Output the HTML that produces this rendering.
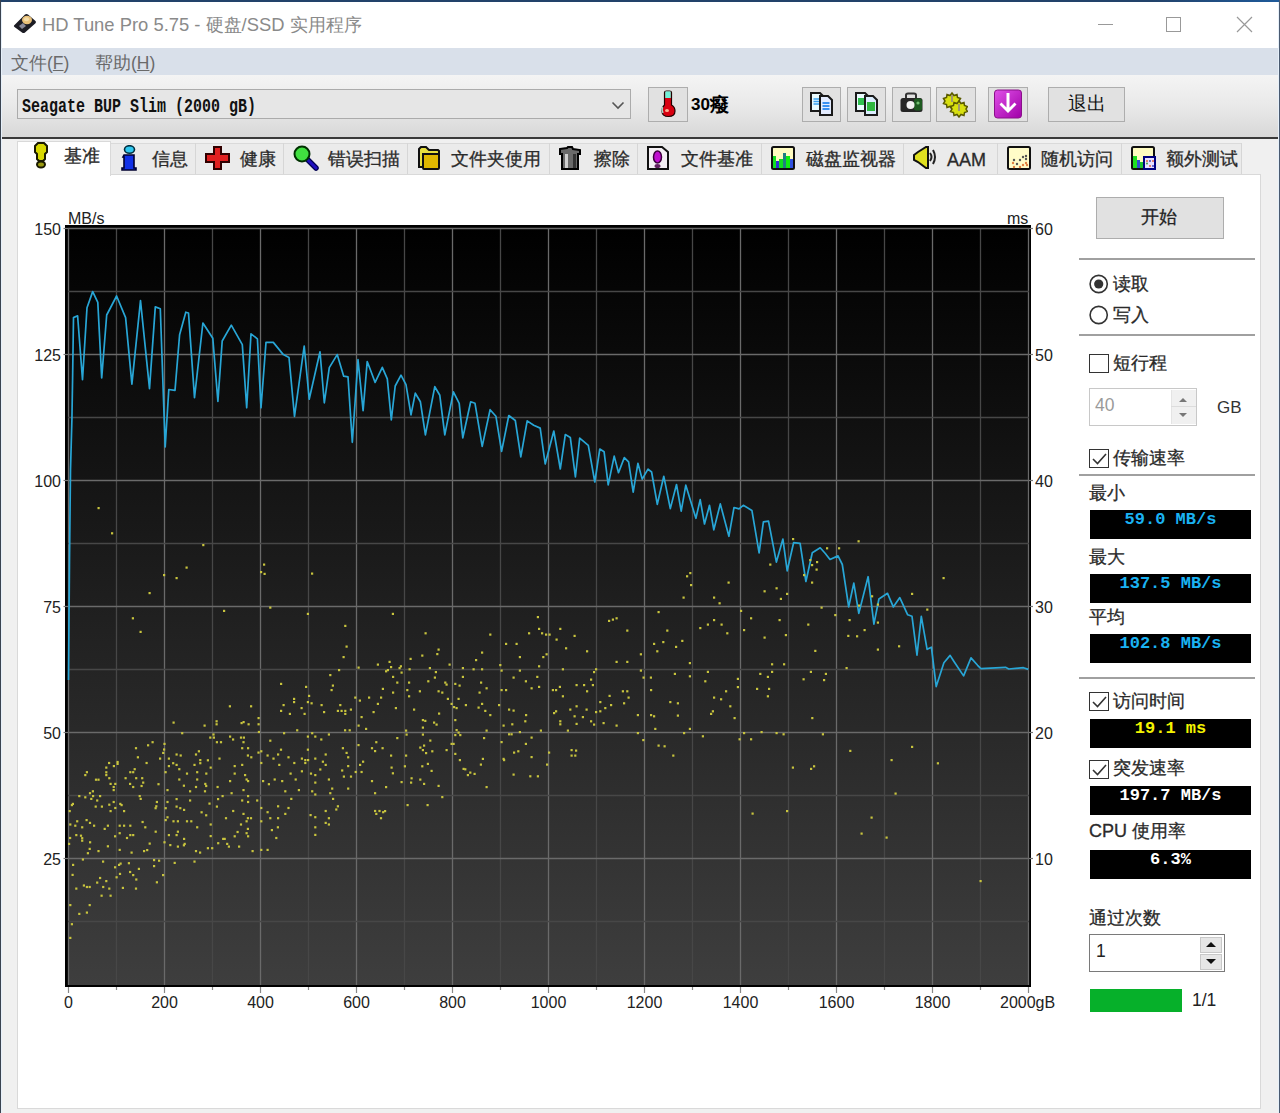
<!DOCTYPE html>
<html><head><meta charset="utf-8">
<style>
*{box-sizing:border-box}
html,body{margin:0;padding:0}
body{width:1280px;height:1113px;overflow:hidden;position:relative;background:#f0f0f0;font-family:"Liberation Sans",sans-serif;color:#000}
.a{position:absolute}
.btn{position:absolute;background:#e1e1e1;border:1px solid #adadad}
.tab{position:absolute;top:143px;height:32px;background:#f0f0f0;border:1px solid #d9d9d9;border-bottom:none;font-size:18px;color:#303030;white-space:nowrap}
.tab .ic{position:absolute;top:3px}
.tab .tx{position:absolute;top:4px}
.tt{font-size:18px;font-weight:500;color:#2a2a2a;-webkit-text-stroke:0.3px #2a2a2a;line-height:20px;white-space:nowrap}
.cl{margin-top:1px;font-size:16px;color:#222;line-height:18px;white-space:nowrap}
.lbl{position:absolute;font-size:18px;font-weight:500;color:#2a2a2a;-webkit-text-stroke:0.3px #2a2a2a;white-space:nowrap;line-height:20px}
.box{position:absolute;background:#000;left:1090px;width:161px;height:29px;font-family:"Liberation Mono",monospace;font-weight:bold;font-size:17px;line-height:20px;text-align:center;white-space:pre}
.chk{position:absolute;left:1089px;width:20px;height:19px;border:1.5px solid #333;background:#fff}
.sep{position:absolute;left:1079px;width:176px;height:2px;background:#a0a0a0}
</style></head><body>
<!-- window frame -->
<div class="a" style="left:0;top:0;width:1280px;height:2px;background:linear-gradient(90deg,#22426a 0,#22426a 90%,#1e5a9a 100%)"></div>
<div class="a" style="left:0;top:0;width:1px;height:1113px;background:#3a4350"></div>
<div class="a" style="left:1279px;top:0;width:1px;height:1113px;background:#4a5a70"></div>
<div class="a" style="left:1px;top:2px;width:1px;height:1111px;background:#e6f0fa"></div>
<div class="a" style="left:1278px;top:2px;width:1px;height:1111px;background:#e6f0fa"></div>
<!-- title bar -->
<div class="a" style="left:2px;top:2px;width:1276px;height:46px;background:#fff"></div>
<div class="a" id="title" style="left:42px;top:14px;font-size:18.4px;color:#8a8a8a;white-space:nowrap;line-height:22px">HD Tune Pro 5.75 - 硬盘/SSD 实用程序</div>
<!-- menu -->
<div class="a" style="left:2px;top:48px;width:1276px;height:27px;background:#d9e0ea"></div>
<div class="a" style="left:11px;top:52px;font-size:17.5px;color:#6a6a6a;line-height:22px;white-space:nowrap">文件(<u>F</u>)</div>
<div class="a" style="left:95px;top:52px;font-size:17.5px;color:#6a6a6a;line-height:22px;white-space:nowrap">帮助(<u>H</u>)</div>
<!-- toolbar -->
<div class="a" style="left:2px;top:75px;width:1276px;height:62px;background:linear-gradient(#f4f4f4,#e9e9e9 50%,#d8d8d8)"></div>
<div class="a" style="left:2px;top:137px;width:1276px;height:2px;background:#3a3a3a"></div>
<!-- combo -->
<div class="a" style="left:17px;top:89px;width:614px;height:30px;background:#e6e6e6;border:1px solid #ababab"></div>
<div class="a" id="combo" style="left:22px;top:95px;font-family:'Liberation Mono',monospace;font-size:15px;font-weight:bold;line-height:20px;color:#111;white-space:pre;transform:scaleY(1.3);transform-origin:0 0">Seagate BUP Slim (2000 gB)</div>
<!-- temp button -->
<div class="btn" style="left:648px;top:87px;width:40px;height:35px;"></div>
<div class="a" style="left:691px;top:95px;font-size:17px;font-weight:bold;line-height:20px;white-space:nowrap">30<span style="font-size:19px;vertical-align:-1px">癈</span></div>
<!-- icon buttons -->
<div class="btn" style="left:802px;top:87px;width:39px;height:35px"></div>
<div class="btn" style="left:847px;top:87px;width:39px;height:35px"></div>
<div class="btn" style="left:892px;top:87px;width:39px;height:35px"></div>
<div class="btn" style="left:936px;top:87px;width:40px;height:35px"></div>
<div class="btn" style="left:988px;top:87px;width:40px;height:35px"></div>
<div class="btn" style="left:1048px;top:87px;width:77px;height:35px"></div>
<div class="a" style="left:1068px;top:93px;font-size:19px;line-height:22px;color:#111">退出</div>

<!-- toolbar icons -->
<svg class="a" style="left:659px;top:90px" width="18" height="28" viewBox="0 0 18 28"><path d="M5.5 2.5q0-1.5 2-1.5h3q2 0 2 1.5V15q3.5 2 3.5 6 0 5.5-6.5 5.5T3 21q0-4 2.5-6z" fill="#d80010" stroke="#200000" stroke-width="1.2"/><path d="M6.2 2q0-.7 1-.7h3.6q1 0 1 .7v6H6.2z" fill="#70f0d8"/><ellipse cx="8" cy="20.5" rx="2" ry="1.6" fill="#ffb090"/><path d="M3.5 17q-1 3 .5 6" stroke="#a8d8c8" stroke-width="1.5" fill="none"/></svg>
<svg class="a" style="left:809px;top:91px" width="27" height="26" viewBox="0 0 27 26"><path d="M2 2h9l3 3v15H2z" fill="#eafcff" stroke="#1a1a1a" stroke-width="2"/><path d="M4.5 8h6M4.5 10.5h6M4.5 13h6" stroke="#3aa0f0" stroke-width="1.6"/><path d="M11 5h8l4 4v15H11z" fill="#e4ecff" stroke="#1a1a1a" stroke-width="2"/><path d="M13.5 12h7M13.5 15h7M13.5 18h7" stroke="#3a90f0" stroke-width="1.8"/></svg>
<svg class="a" style="left:854px;top:91px" width="27" height="26" viewBox="0 0 27 26"><path d="M2 2h9l3 3v15H2z" fill="#eafcff" stroke="#1a1a1a" stroke-width="2"/><rect x="4" y="7" width="6" height="7" fill="#30c050"/><path d="M11 5h8l4 4v15H11z" fill="#dceeff" stroke="#1a1a1a" stroke-width="2"/><rect x="13" y="11" width="8" height="9" fill="#30b840"/></svg>
<svg class="a" style="left:899px;top:92px" width="25" height="22" viewBox="0 0 25 22"><path d="M7 6V3q0-1.5 2-1.5h6q2 0 2 1.5v3" fill="none" stroke="#333" stroke-width="2"/><rect x="1.5" y="6" width="22" height="14" rx="2.5" fill="#262626"/><rect x="15" y="6.5" width="8" height="12" rx="2" fill="#1d5a20"/><circle cx="11.5" cy="13" r="4" fill="#f2f2f2"/><circle cx="19" cy="11" r="1.6" fill="#70c070"/></svg>
<svg class="a" style="left:942px;top:91px" width="26" height="27" viewBox="0 0 26 27"><g stroke="#5a5a00" stroke-width="1.5" fill="#d8e010"><path d="M9 2l2 2.5 3-1 .5 3 3 1-1.5 2.5 1.5 2.5-3 1-.5 3-3-1L9 18l-2-2.5-3 1-.5-3-3-1 1.5-2.5L.5 7.5l3-1 .5-3 3 1z" transform="translate(1,0)"/><path d="M9 2l2 2.5 3-1 .5 3 3 1-1.5 2.5 1.5 2.5-3 1-.5 3-3-1L9 18l-2-2.5-3 1-.5-3-3-1 1.5-2.5L.5 7.5l3-1 .5-3 3 1z" transform="translate(8,8)"/></g><rect x="9" y="4" width="2" height="7" fill="#a09870"/><rect x="16" y="13" width="2" height="7" fill="#a09870"/></svg>
<svg class="a" style="left:993px;top:89px" width="30" height="30" viewBox="0 0 30 30"><defs><linearGradient id="pg" x1="0" y1="0" x2="1" y2="1"><stop offset="0" stop-color="#e050e8"/><stop offset="1" stop-color="#a000a8"/></linearGradient></defs><rect x="1.5" y="1" width="27" height="28" rx="3" fill="url(#pg)" stroke="#8a108a" stroke-width="1"/><path d="M13.5 4h3v14.5l5-5 2 2L15 24l-8.5-8.5 2-2 5 5z" fill="#fff"/></svg>
<svg class="a" style="left:611px;top:101px" width="14" height="9" viewBox="0 0 14 9"><path d="M1.5 1.5l5.5 5.5 5.5-5.5" fill="none" stroke="#555" stroke-width="1.6"/></svg>
<!-- title icon -->
<svg class="a" style="left:13px;top:12px" width="24" height="22" viewBox="0 0 24 22"><path d="M1 13.5L12 2.5q1.5-1.2 3 0l7.5 6.5q1 1 0 2.2L12 20.5q-1.5 1.2-3 0L1.5 15q-1-.8-.5-1.5z" fill="#1c1c24"/><ellipse cx="14" cy="8" rx="5" ry="4.2" fill="#e8c078"/><ellipse cx="13.5" cy="7.2" rx="2.6" ry="2" fill="#f4dca8"/><path d="M6 14l4-3 3 3-4 3z" fill="#8a8a9a"/></svg>
<!-- window controls -->
<div class="a" style="left:1098px;top:24px;width:15px;height:1px;background:#999"></div>
<div class="a" style="left:1166px;top:17px;width:15px;height:15px;border:1px solid #999"></div>
<svg class="a" style="left:1236px;top:16px" width="17" height="17" viewBox="0 0 17 17"><path d="M1 1l15 15M16 1L1 16" stroke="#999" stroke-width="1.2"/></svg>
<!-- tabs area -->
<div class="a" style="left:17px;top:174px;width:1244px;height:935px;background:#fff;border:1px solid #d9d9d9"></div>

<div class="a" style="left:17px;top:143px;width:1225px;height:32px;background:#ebebeb;border-top:1px solid #dadada;border-bottom:1px solid #d9d9d9"></div>
<div class="a" style="left:195px;top:143px;width:1px;height:31px;background:#d6d6d6"></div>
<div class="a" style="left:283px;top:143px;width:1px;height:31px;background:#d6d6d6"></div>
<div class="a" style="left:407px;top:143px;width:1px;height:31px;background:#d6d6d6"></div>
<div class="a" style="left:549px;top:143px;width:1px;height:31px;background:#d6d6d6"></div>
<div class="a" style="left:637px;top:143px;width:1px;height:31px;background:#d6d6d6"></div>
<div class="a" style="left:761px;top:143px;width:1px;height:31px;background:#d6d6d6"></div>
<div class="a" style="left:903px;top:143px;width:1px;height:31px;background:#d6d6d6"></div>
<div class="a" style="left:997px;top:143px;width:1px;height:31px;background:#d6d6d6"></div>
<div class="a" style="left:1121px;top:143px;width:1px;height:31px;background:#d6d6d6"></div>
<div class="a" style="left:1241px;top:143px;width:1px;height:31px;background:#d6d6d6"></div>
<!-- selected tab -->
<div class="a" style="left:17px;top:141px;width:94px;height:35px;background:#fff;border:1px solid #d9d9d9;border-bottom:none"></div>
<div class="a tt" style="left:64px;top:146px">基准</div>
<div class="a tt" style="left:152px;top:149px">信息</div>
<div class="a tt" style="left:240px;top:149px">健康</div>
<div class="a tt" style="left:328px;top:149px">错误扫描</div>
<div class="a tt" style="left:451px;top:149px">文件夹使用</div>
<div class="a tt" style="left:594px;top:149px">擦除</div>
<div class="a tt" style="left:681px;top:149px">文件基准</div>
<div class="a tt" style="left:806px;top:149px">磁盘监视器</div>
<div class="a tt" style="left:947px;top:150px">AAM</div>
<div class="a tt" style="left:1041px;top:149px">随机访问</div>
<div class="a tt" style="left:1166px;top:149px">额外测试</div>
<!-- tab icons -->
<svg class="a" style="left:34px;top:142px" width="14" height="27" viewBox="0 0 14 27"><path d="M4 1h6l3 3v6l-2 2v5l-2 2H5l-2-2v-5L1 10V4z" fill="#d8d800" stroke="#1a1a00" stroke-width="2"/><ellipse cx="7" cy="22.5" rx="4" ry="3" fill="#9a9a10" stroke="#1a1a00" stroke-width="2"/></svg>
<svg class="a" style="left:121px;top:145px" width="16" height="26" viewBox="0 0 16 26"><ellipse cx="8.5" cy="4.5" rx="5" ry="3.8" fill="#30c8f0" stroke="#003040" stroke-width="1.6"/><path d="M3 10h10v13h2v2H1v-2h2V12H2z" fill="#1030e8" stroke="#000030" stroke-width="1.6"/></svg>
<svg class="a" style="left:205px;top:146px" width="25" height="24" viewBox="0 0 25 24"><path d="M9 1h7v7h8v8h-8v7H9v-7H1V8h8z" fill="#e02020" stroke="#300000" stroke-width="2"/></svg>
<svg class="a" style="left:292px;top:145px" width="27" height="26" viewBox="0 0 27 26"><line x1="15" y1="14" x2="24" y2="23" stroke="#000050" stroke-width="5.5" stroke-linecap="round"/><line x1="15" y1="14" x2="24" y2="23" stroke="#2010c0" stroke-width="3" stroke-linecap="round"/><circle cx="10" cy="9" r="7.5" fill="#40e040" stroke="#003000" stroke-width="2"/></svg>
<svg class="a" style="left:416px;top:145px" width="26" height="26" viewBox="0 0 26 26"><path d="M3 4l2-2h5l3 3h9l1 1v3H7v13H3z" fill="#e8e040" stroke="#111" stroke-width="2"/><rect x="7" y="9" width="16" height="15" rx="1" fill="#e0b800" stroke="#111" stroke-width="2"/></svg>
<svg class="a" style="left:558px;top:145px" width="24" height="26" viewBox="0 0 24 26"><path d="M2 4l7-1 1-1h4l1 2 7 1v4h-2v15H4V9H2z" fill="#6a6a6a" stroke="#000" stroke-width="2"/><rect x="7" y="9" width="3" height="14" fill="#d0d0d0"/><rect x="15" y="9" width="3" height="14" fill="#333"/></svg>
<svg class="a" style="left:646px;top:145px" width="24" height="26" viewBox="0 0 24 26"><path d="M2 2h14l6 5v17H2z" fill="#f4f0f4" stroke="#111" stroke-width="2"/><ellipse cx="11.5" cy="12" rx="4" ry="6" fill="#c010d0" stroke="#400040" stroke-width="1.5"/><ellipse cx="11.5" cy="21" rx="3" ry="2" fill="#602060"/></svg>
<svg class="a" style="left:770px;top:145px" width="26" height="26" viewBox="0 0 26 26"><rect x="2" y="2" width="22" height="22" rx="1.5" fill="#fffcc0" stroke="#101010" stroke-width="2"/><path d="M3 11h3v12H3z" fill="#10e020"/><path d="M6 16h3v7H6z" fill="#3030d0"/><path d="M9 14h4v9H9z" fill="#10e020"/><path d="M13 8h3v15h-3z" fill="#208080"/><path d="M16 11h4v12h-4z" fill="#10ee10"/><path d="M20 14h3v9h-3z" fill="#3050e0"/></svg>
<svg class="a" style="left:912px;top:145px" width="27" height="25" viewBox="0 0 27 25"><path d="M2 10l4-3 8-5h2v21h-2l-8-6-4-2z" fill="#e0e020" stroke="#111" stroke-width="2"/><path d="M18 8q3 4 0 8M21 5q4 7 0 14" fill="none" stroke="#222" stroke-width="2"/></svg>
<svg class="a" style="left:1006px;top:145px" width="26" height="26" viewBox="0 0 26 26"><rect x="2" y="2" width="22" height="22" rx="1.5" fill="#fffcc8" stroke="#101010" stroke-width="2"/><g fill="#555"><circle cx="8" cy="15" r="1.2"/><circle cx="14" cy="15" r="1.2"/><circle cx="17" cy="12" r="1.2"/><circle cx="20" cy="11" r="1.2"/><circle cx="20" cy="14" r="1.2"/><circle cx="11" cy="19" r="1.2"/></g><g fill="#e08040"><circle cx="7" cy="18" r="1.2"/><circle cx="8" cy="22" r="1.2"/><circle cx="14" cy="22" r="1.2"/><circle cx="17" cy="20" r="1.2"/><circle cx="21" cy="20" r="1.2"/><circle cx="20" cy="18" r="1.2"/></g></svg>
<svg class="a" style="left:1130px;top:145px" width="27" height="26" viewBox="0 0 27 26"><rect x="2" y="2" width="22" height="22" rx="1.5" fill="#fffcc0" stroke="#101010" stroke-width="2"/><path d="M3 11h4v12H3z" fill="#20e020"/><path d="M7 15h3v8H7z" fill="#3050d0"/><path d="M10 17h3v6h-3z" fill="#20c030"/><rect x="14" y="12" width="11" height="12" fill="#e8e0ff" stroke="#000080" stroke-width="2"/><g fill="#e06040"><circle cx="17" cy="16" r="1"/><circle cx="23" cy="16" r="1"/><circle cx="20" cy="21" r="1"/></g><g fill="#40a040"><circle cx="17" cy="18.5" r="1"/></g><g fill="#4040c0"><circle cx="20" cy="16" r="1"/><circle cx="23" cy="21" r="1"/></g></svg>

<!-- CHART -->
<svg class="a" style="left:0;top:0" width="1280" height="1113" viewBox="0 0 1280 1113">
<defs><linearGradient id="bg" x1="0" y1="0" x2="0" y2="1"><stop offset="0" stop-color="#000"/><stop offset="1" stop-color="#3e3e3e"/></linearGradient></defs>
<rect x="65" y="225" width="966" height="762" fill="#000"/>
<rect x="68" y="228" width="961" height="757" fill="url(#bg)"/>
<line x1="68.5" y1="228" x2="68.5" y2="985" stroke="#6a6a6a" stroke-width="1.3"/>
<line x1="68.5" y1="987" x2="68.5" y2="993" stroke="#888" stroke-width="1.2"/>
<line x1="116.5" y1="228" x2="116.5" y2="985" stroke="#474747" stroke-width="1.3"/>
<line x1="116.5" y1="987" x2="116.5" y2="990" stroke="#888" stroke-width="1.2"/>
<line x1="164.5" y1="228" x2="164.5" y2="985" stroke="#6a6a6a" stroke-width="1.3"/>
<line x1="164.5" y1="987" x2="164.5" y2="993" stroke="#888" stroke-width="1.2"/>
<line x1="212.5" y1="228" x2="212.5" y2="985" stroke="#474747" stroke-width="1.3"/>
<line x1="212.5" y1="987" x2="212.5" y2="990" stroke="#888" stroke-width="1.2"/>
<line x1="260.5" y1="228" x2="260.5" y2="985" stroke="#6a6a6a" stroke-width="1.3"/>
<line x1="260.5" y1="987" x2="260.5" y2="993" stroke="#888" stroke-width="1.2"/>
<line x1="308.5" y1="228" x2="308.5" y2="985" stroke="#474747" stroke-width="1.3"/>
<line x1="308.5" y1="987" x2="308.5" y2="990" stroke="#888" stroke-width="1.2"/>
<line x1="356.5" y1="228" x2="356.5" y2="985" stroke="#6a6a6a" stroke-width="1.3"/>
<line x1="356.5" y1="987" x2="356.5" y2="993" stroke="#888" stroke-width="1.2"/>
<line x1="404.5" y1="228" x2="404.5" y2="985" stroke="#474747" stroke-width="1.3"/>
<line x1="404.5" y1="987" x2="404.5" y2="990" stroke="#888" stroke-width="1.2"/>
<line x1="452.5" y1="228" x2="452.5" y2="985" stroke="#6a6a6a" stroke-width="1.3"/>
<line x1="452.5" y1="987" x2="452.5" y2="993" stroke="#888" stroke-width="1.2"/>
<line x1="500.5" y1="228" x2="500.5" y2="985" stroke="#474747" stroke-width="1.3"/>
<line x1="500.5" y1="987" x2="500.5" y2="990" stroke="#888" stroke-width="1.2"/>
<line x1="548.5" y1="228" x2="548.5" y2="985" stroke="#6a6a6a" stroke-width="1.3"/>
<line x1="548.5" y1="987" x2="548.5" y2="993" stroke="#888" stroke-width="1.2"/>
<line x1="596.5" y1="228" x2="596.5" y2="985" stroke="#474747" stroke-width="1.3"/>
<line x1="596.5" y1="987" x2="596.5" y2="990" stroke="#888" stroke-width="1.2"/>
<line x1="644.5" y1="228" x2="644.5" y2="985" stroke="#6a6a6a" stroke-width="1.3"/>
<line x1="644.5" y1="987" x2="644.5" y2="993" stroke="#888" stroke-width="1.2"/>
<line x1="692.5" y1="228" x2="692.5" y2="985" stroke="#474747" stroke-width="1.3"/>
<line x1="692.5" y1="987" x2="692.5" y2="990" stroke="#888" stroke-width="1.2"/>
<line x1="740.5" y1="228" x2="740.5" y2="985" stroke="#6a6a6a" stroke-width="1.3"/>
<line x1="740.5" y1="987" x2="740.5" y2="993" stroke="#888" stroke-width="1.2"/>
<line x1="788.5" y1="228" x2="788.5" y2="985" stroke="#474747" stroke-width="1.3"/>
<line x1="788.5" y1="987" x2="788.5" y2="990" stroke="#888" stroke-width="1.2"/>
<line x1="836.5" y1="228" x2="836.5" y2="985" stroke="#6a6a6a" stroke-width="1.3"/>
<line x1="836.5" y1="987" x2="836.5" y2="993" stroke="#888" stroke-width="1.2"/>
<line x1="884.5" y1="228" x2="884.5" y2="985" stroke="#474747" stroke-width="1.3"/>
<line x1="884.5" y1="987" x2="884.5" y2="990" stroke="#888" stroke-width="1.2"/>
<line x1="932.5" y1="228" x2="932.5" y2="985" stroke="#6a6a6a" stroke-width="1.3"/>
<line x1="932.5" y1="987" x2="932.5" y2="993" stroke="#888" stroke-width="1.2"/>
<line x1="980.5" y1="228" x2="980.5" y2="985" stroke="#474747" stroke-width="1.3"/>
<line x1="980.5" y1="987" x2="980.5" y2="990" stroke="#888" stroke-width="1.2"/>
<line x1="1028.5" y1="228" x2="1028.5" y2="985" stroke="#6a6a6a" stroke-width="1.3"/>
<line x1="1028.5" y1="987" x2="1028.5" y2="993" stroke="#888" stroke-width="1.2"/>
<line x1="68" y1="228.5" x2="1029" y2="228.5" stroke="#6a6a6a" stroke-width="1.3"/>
<line x1="68" y1="291.5" x2="1029" y2="291.5" stroke="#474747" stroke-width="1.3"/>
<line x1="68" y1="354.5" x2="1029" y2="354.5" stroke="#6a6a6a" stroke-width="1.3"/>
<line x1="68" y1="417.5" x2="1029" y2="417.5" stroke="#474747" stroke-width="1.3"/>
<line x1="68" y1="480.5" x2="1029" y2="480.5" stroke="#6a6a6a" stroke-width="1.3"/>
<line x1="68" y1="543.5" x2="1029" y2="543.5" stroke="#474747" stroke-width="1.3"/>
<line x1="68" y1="606.5" x2="1029" y2="606.5" stroke="#6a6a6a" stroke-width="1.3"/>
<line x1="68" y1="669.5" x2="1029" y2="669.5" stroke="#474747" stroke-width="1.3"/>
<line x1="68" y1="732.5" x2="1029" y2="732.5" stroke="#6a6a6a" stroke-width="1.3"/>
<line x1="68" y1="795.5" x2="1029" y2="795.5" stroke="#474747" stroke-width="1.3"/>
<line x1="68" y1="858.5" x2="1029" y2="858.5" stroke="#6a6a6a" stroke-width="1.3"/>
<line x1="68" y1="921.5" x2="1029" y2="921.5" stroke="#474747" stroke-width="1.3"/>
<polyline fill="none" stroke="#28a6d6" stroke-width="1.7" stroke-linejoin="round" points="68.5,680 69.5,560 70.5,470 71.9,420 72.6,377.9 73.5,317.6 77.6,315.8 82.5,379.7 87,307.8 92.7,291.6 97.8,302.4 101.7,377.9 106.7,315 116.6,296 125.6,317.6 131.9,384.2 140.5,300.6 149.5,388.6 155.3,306.9 160.3,308.7 165.2,447 168.8,389.5 175,390.4 179.6,334.7 185.8,312.2 188.5,313 194.5,397.6 202.9,323 212.8,338.3 217.9,401.4 222.2,341 231.3,325.2 242.3,344.6 246.7,407.8 251,333.8 257.4,338.8 261,407.8 266,342.4 273.3,342.4 283.3,354.6 289,357.5 294.5,416.4 304.2,346 309.2,399.2 320,351.8 324.3,402.8 329.3,367.6 337.2,354.6 343.7,376.2 348,376.9 352.3,442.3 358,359.7 363.1,410.7 367.2,361.6 370,368.8 375.1,382.4 382.3,367.3 387.3,378.8 391.3,419.8 395.2,386 401,375.2 406,384.6 411,414.8 415.3,393.2 420.4,401.8 425.4,434.9 434.8,386.7 439.8,395.3 444.8,434.9 453.4,391.8 459.2,403.3 462.8,437.8 470.7,401.8 475,403.3 482.2,446.4 490.1,409.7 495.9,416.2 501.6,451.4 508.8,415.5 515.3,420.5 520.8,456.8 527.2,420.9 533.7,425.2 540.2,428.1 545.2,464 553.8,431 560.3,469 565.3,434.6 570.3,437.4 575.4,477 579.7,438.2 588.3,445.3 594.8,482 599.8,449 604.1,451.8 608.2,484.9 614.2,456.1 618.5,472.7 624.3,457.6 628.6,461.9 633.2,492.1 637.9,463.3 642.2,479.1 648,469.1 651.6,472 657.3,504.3 663.8,476.3 670.3,508.6 676.5,484.5 681.2,511.1 685.8,485.2 695.9,518.3 700.2,499.6 704.5,524 709.5,505.3 713.8,529.8 720.3,503.9 728.9,536.3 734,507.5 739,508.9 743.3,505.3 751.9,510.4 759.1,552.8 763.4,521.9 768.5,521.2 776.4,562.1 782.9,539.1 787.2,570.8 793.6,542.7 800.1,543.4 805.9,581.5 812.3,552.8 820.2,547.8 825.3,553.5 830,559.5 838,555.9 842.3,564.5 848.7,606.9 853.8,583.2 858.8,613.4 868.1,576.7 873.9,624.2 878.9,599 887.5,593.3 893.3,606.9 899.8,597.6 907.7,614.8 912,616.3 917,655.1 921.3,616.3 927.1,649.3 931.4,647.2 936.2,686.6 943.9,662.8 950.1,655.4 953.8,661.2 963.6,675.9 971,657.9 977.6,665.3 980.9,668.6 1005.5,667.3 1008.8,669 1023.5,667.7 1028.4,669.4"/>
<line x1="63.5" y1="228.5" x2="68" y2="228.5" stroke="#777" stroke-width="1.2"/><line x1="1029" y1="228.5" x2="1033" y2="228.5" stroke="#777" stroke-width="1.2"/><line x1="63.5" y1="354.5" x2="68" y2="354.5" stroke="#777" stroke-width="1.2"/><line x1="1029" y1="354.5" x2="1033" y2="354.5" stroke="#777" stroke-width="1.2"/><line x1="63.5" y1="480.5" x2="68" y2="480.5" stroke="#777" stroke-width="1.2"/><line x1="1029" y1="480.5" x2="1033" y2="480.5" stroke="#777" stroke-width="1.2"/><line x1="63.5" y1="606.5" x2="68" y2="606.5" stroke="#777" stroke-width="1.2"/><line x1="1029" y1="606.5" x2="1033" y2="606.5" stroke="#777" stroke-width="1.2"/><line x1="63.5" y1="732.5" x2="68" y2="732.5" stroke="#777" stroke-width="1.2"/><line x1="1029" y1="732.5" x2="1033" y2="732.5" stroke="#777" stroke-width="1.2"/><line x1="63.5" y1="858.5" x2="68" y2="858.5" stroke="#777" stroke-width="1.2"/><line x1="1029" y1="858.5" x2="1033" y2="858.5" stroke="#777" stroke-width="1.2"/><!--DOTS--><g fill="#c8c43e"><rect x="97.5" y="507.0" width="2.2" height="2.2"/><rect x="111.0" y="532.2" width="2.2" height="2.2"/><rect x="202.2" y="544.0" width="2.2" height="2.2"/><rect x="185.5" y="566.5" width="2.2" height="2.2"/><rect x="163.0" y="574.0" width="2.2" height="2.2"/><rect x="175.5" y="577.0" width="2.2" height="2.2"/><rect x="148.5" y="592.0" width="2.2" height="2.2"/><rect x="131.8" y="617.2" width="2.2" height="2.2"/><rect x="139.5" y="630.8" width="2.2" height="2.2"/><rect x="263.0" y="563.5" width="2.2" height="2.2"/><rect x="260.0" y="571.0" width="2.2" height="2.2"/><rect x="263.5" y="572.8" width="2.2" height="2.2"/><rect x="311.0" y="572.5" width="2.2" height="2.2"/><rect x="223.0" y="609.8" width="2.2" height="2.2"/><rect x="269.2" y="606.5" width="2.2" height="2.2"/><rect x="306.8" y="612.8" width="2.2" height="2.2"/><rect x="344.2" y="624.8" width="2.2" height="2.2"/><rect x="345.5" y="645.5" width="2.2" height="2.2"/><rect x="342.5" y="656.0" width="2.2" height="2.2"/><rect x="338.0" y="669.0" width="2.2" height="2.2"/><rect x="357.5" y="666.5" width="2.2" height="2.2"/><rect x="376.8" y="663.5" width="2.2" height="2.2"/><rect x="329.2" y="674.0" width="2.2" height="2.2"/><rect x="331.8" y="684.5" width="2.2" height="2.2"/><rect x="330.5" y="689.0" width="2.2" height="2.2"/><rect x="280.0" y="682.8" width="2.2" height="2.2"/><rect x="305.0" y="685.8" width="2.2" height="2.2"/><rect x="308.0" y="694.8" width="2.2" height="2.2"/><rect x="293.0" y="697.8" width="2.2" height="2.2"/><rect x="293.0" y="701.0" width="2.2" height="2.2"/><rect x="306.8" y="701.0" width="2.2" height="2.2"/><rect x="310.5" y="702.2" width="2.2" height="2.2"/><rect x="282.5" y="704.0" width="2.2" height="2.2"/><rect x="280.0" y="709.8" width="2.2" height="2.2"/><rect x="288.8" y="712.8" width="2.2" height="2.2"/><rect x="300.5" y="707.0" width="2.2" height="2.2"/><rect x="303.5" y="712.8" width="2.2" height="2.2"/><rect x="320.5" y="704.0" width="2.2" height="2.2"/><rect x="323.0" y="711.0" width="2.2" height="2.2"/><rect x="339.2" y="704.0" width="2.2" height="2.2"/><rect x="336.8" y="709.8" width="2.2" height="2.2"/><rect x="340.5" y="709.8" width="2.2" height="2.2"/><rect x="344.2" y="709.8" width="2.2" height="2.2"/><rect x="344.2" y="712.8" width="2.2" height="2.2"/><rect x="349.8" y="708.5" width="2.2" height="2.2"/><rect x="354.2" y="696.5" width="2.2" height="2.2"/><rect x="358.8" y="699.5" width="2.2" height="2.2"/><rect x="368.0" y="696.5" width="2.2" height="2.2"/><rect x="380.0" y="696.5" width="2.2" height="2.2"/><rect x="376.8" y="702.8" width="2.2" height="2.2"/><rect x="381.8" y="687.8" width="2.2" height="2.2"/><rect x="372.5" y="711.0" width="2.2" height="2.2"/><rect x="360.5" y="716.0" width="2.2" height="2.2"/><rect x="357.5" y="724.5" width="2.2" height="2.2"/><rect x="365.0" y="727.8" width="2.2" height="2.2"/><rect x="228.8" y="705.2" width="2.2" height="2.2"/><rect x="250.0" y="705.2" width="2.2" height="2.2"/><rect x="172.5" y="721.5" width="2.2" height="2.2"/><rect x="203.5" y="724.5" width="2.2" height="2.2"/><rect x="215.5" y="720.2" width="2.2" height="2.2"/><rect x="215.5" y="723.2" width="2.2" height="2.2"/><rect x="242.5" y="721.0" width="2.2" height="2.2"/><rect x="240.5" y="722.0" width="2.2" height="2.2"/><rect x="247.5" y="723.2" width="2.2" height="2.2"/><rect x="257.5" y="717.0" width="2.2" height="2.2"/><rect x="257.5" y="723.2" width="2.2" height="2.2"/><rect x="181.1" y="732.1" width="2.2" height="2.2"/><rect x="212.4" y="733.4" width="2.2" height="2.2"/><rect x="209.2" y="736.5" width="2.2" height="2.2"/><rect x="212.8" y="736.5" width="2.2" height="2.2"/><rect x="215.8" y="741.1" width="2.2" height="2.2"/><rect x="219.9" y="741.1" width="2.2" height="2.2"/><rect x="151.5" y="741.1" width="2.2" height="2.2"/><rect x="147.0" y="744.2" width="2.2" height="2.2"/><rect x="163.4" y="742.8" width="2.2" height="2.2"/><rect x="134.9" y="747.1" width="2.2" height="2.2"/><rect x="163.0" y="748.4" width="2.2" height="2.2"/><rect x="162.1" y="751.8" width="2.2" height="2.2"/><rect x="175.5" y="753.4" width="2.2" height="2.2"/><rect x="179.6" y="754.4" width="2.2" height="2.2"/><rect x="197.8" y="750.2" width="2.2" height="2.2"/><rect x="194.9" y="753.4" width="2.2" height="2.2"/><rect x="136.8" y="756.2" width="2.2" height="2.2"/><rect x="159.0" y="757.5" width="2.2" height="2.2"/><rect x="167.8" y="757.5" width="2.2" height="2.2"/><rect x="199.2" y="759.0" width="2.2" height="2.2"/><rect x="206.8" y="759.2" width="2.2" height="2.2"/><rect x="218.4" y="757.5" width="2.2" height="2.2"/><rect x="199.2" y="762.1" width="2.2" height="2.2"/><rect x="193.4" y="763.8" width="2.2" height="2.2"/><rect x="209.6" y="766.5" width="2.2" height="2.2"/><rect x="145.5" y="761.9" width="2.2" height="2.2"/><rect x="172.1" y="762.1" width="2.2" height="2.2"/><rect x="175.5" y="763.8" width="2.2" height="2.2"/><rect x="167.8" y="765.0" width="2.2" height="2.2"/><rect x="178.2" y="768.1" width="2.2" height="2.2"/><rect x="108.0" y="761.9" width="2.2" height="2.2"/><rect x="116.5" y="760.9" width="2.2" height="2.2"/><rect x="116.5" y="762.8" width="2.2" height="2.2"/><rect x="112.8" y="765.0" width="2.2" height="2.2"/><rect x="105.2" y="766.5" width="2.2" height="2.2"/><rect x="105.2" y="771.2" width="2.2" height="2.2"/><rect x="105.2" y="774.0" width="2.2" height="2.2"/><rect x="85.8" y="771.1" width="2.2" height="2.2"/><rect x="84.2" y="774.0" width="2.2" height="2.2"/><rect x="133.6" y="768.1" width="2.2" height="2.2"/><rect x="129.2" y="771.1" width="2.2" height="2.2"/><rect x="132.1" y="771.1" width="2.2" height="2.2"/><rect x="164.5" y="771.1" width="2.2" height="2.2"/><rect x="185.9" y="772.5" width="2.2" height="2.2"/><rect x="196.1" y="771.1" width="2.2" height="2.2"/><rect x="205.2" y="772.5" width="2.2" height="2.2"/><rect x="196.1" y="778.4" width="2.2" height="2.2"/><rect x="178.2" y="778.4" width="2.2" height="2.2"/><rect x="94.9" y="778.6" width="2.2" height="2.2"/><rect x="97.4" y="778.6" width="2.2" height="2.2"/><rect x="108.2" y="777.1" width="2.2" height="2.2"/><rect x="124.5" y="777.1" width="2.2" height="2.2"/><rect x="135.1" y="777.1" width="2.2" height="2.2"/><rect x="141.1" y="777.1" width="2.2" height="2.2"/><rect x="142.1" y="781.5" width="2.2" height="2.2"/><rect x="140.5" y="784.9" width="2.2" height="2.2"/><rect x="129.0" y="782.8" width="2.2" height="2.2"/><rect x="132.1" y="785.9" width="2.2" height="2.2"/><rect x="109.5" y="782.8" width="2.2" height="2.2"/><rect x="114.2" y="782.8" width="2.2" height="2.2"/><rect x="112.6" y="785.9" width="2.2" height="2.2"/><rect x="112.6" y="789.0" width="2.2" height="2.2"/><rect x="157.4" y="783.1" width="2.2" height="2.2"/><rect x="182.8" y="784.6" width="2.2" height="2.2"/><rect x="194.9" y="785.9" width="2.2" height="2.2"/><rect x="204.2" y="782.8" width="2.2" height="2.2"/><rect x="205.1" y="784.9" width="2.2" height="2.2"/><rect x="203.9" y="790.2" width="2.2" height="2.2"/><rect x="216.5" y="785.9" width="2.2" height="2.2"/><rect x="189.0" y="790.2" width="2.2" height="2.2"/><rect x="166.4" y="789.0" width="2.2" height="2.2"/><rect x="91.8" y="790.2" width="2.2" height="2.2"/><rect x="88.9" y="792.1" width="2.2" height="2.2"/><rect x="92.0" y="795.0" width="2.2" height="2.2"/><rect x="90.2" y="797.8" width="2.2" height="2.2"/><rect x="78.2" y="795.0" width="2.2" height="2.2"/><rect x="84.2" y="796.2" width="2.2" height="2.2"/><rect x="99.0" y="795.0" width="2.2" height="2.2"/><rect x="96.1" y="799.4" width="2.2" height="2.2"/><rect x="138.6" y="795.0" width="2.2" height="2.2"/><rect x="139.6" y="797.8" width="2.2" height="2.2"/><rect x="71.8" y="802.8" width="2.2" height="2.2"/><rect x="70.8" y="804.0" width="2.2" height="2.2"/><rect x="68.6" y="810.0" width="2.2" height="2.2"/><rect x="94.6" y="805.5" width="2.2" height="2.2"/><rect x="100.8" y="805.5" width="2.2" height="2.2"/><rect x="108.2" y="803.6" width="2.2" height="2.2"/><rect x="112.6" y="800.9" width="2.2" height="2.2"/><rect x="119.2" y="802.8" width="2.2" height="2.2"/><rect x="120.5" y="804.0" width="2.2" height="2.2"/><rect x="114.2" y="806.9" width="2.2" height="2.2"/><rect x="109.5" y="810.0" width="2.2" height="2.2"/><rect x="123.0" y="810.0" width="2.2" height="2.2"/><rect x="155.8" y="800.9" width="2.2" height="2.2"/><rect x="155.2" y="805.2" width="2.2" height="2.2"/><rect x="154.5" y="807.1" width="2.2" height="2.2"/><rect x="166.4" y="800.9" width="2.2" height="2.2"/><rect x="164.6" y="807.1" width="2.2" height="2.2"/><rect x="175.5" y="798.0" width="2.2" height="2.2"/><rect x="189.0" y="799.4" width="2.2" height="2.2"/><rect x="179.2" y="807.1" width="2.2" height="2.2"/><rect x="183.0" y="808.8" width="2.2" height="2.2"/><rect x="175.5" y="805.5" width="2.2" height="2.2"/><rect x="208.4" y="802.5" width="2.2" height="2.2"/><rect x="215.8" y="805.5" width="2.2" height="2.2"/><rect x="217.0" y="798.0" width="2.2" height="2.2"/><rect x="221.5" y="795.0" width="2.2" height="2.2"/><rect x="200.5" y="811.2" width="2.2" height="2.2"/><rect x="205.1" y="814.2" width="2.2" height="2.2"/><rect x="76.1" y="820.2" width="2.2" height="2.2"/><rect x="85.5" y="819.0" width="2.2" height="2.2"/><rect x="88.9" y="821.8" width="2.2" height="2.2"/><rect x="93.0" y="824.6" width="2.2" height="2.2"/><rect x="69.2" y="823.4" width="2.2" height="2.2"/><rect x="74.2" y="824.6" width="2.2" height="2.2"/><rect x="81.1" y="826.2" width="2.2" height="2.2"/><rect x="106.8" y="824.6" width="2.2" height="2.2"/><rect x="103.6" y="827.8" width="2.2" height="2.2"/><rect x="118.6" y="824.6" width="2.2" height="2.2"/><rect x="123.0" y="824.6" width="2.2" height="2.2"/><rect x="129.2" y="824.6" width="2.2" height="2.2"/><rect x="141.5" y="820.9" width="2.2" height="2.2"/><rect x="144.2" y="826.2" width="2.2" height="2.2"/><rect x="154.6" y="830.6" width="2.2" height="2.2"/><rect x="166.4" y="816.2" width="2.2" height="2.2"/><rect x="164.6" y="819.0" width="2.2" height="2.2"/><rect x="172.4" y="820.2" width="2.2" height="2.2"/><rect x="176.8" y="820.2" width="2.2" height="2.2"/><rect x="185.9" y="820.2" width="2.2" height="2.2"/><rect x="190.2" y="820.2" width="2.2" height="2.2"/><rect x="196.1" y="826.2" width="2.2" height="2.2"/><rect x="209.6" y="823.4" width="2.2" height="2.2"/><rect x="75.2" y="834.0" width="2.2" height="2.2"/><rect x="79.9" y="834.6" width="2.2" height="2.2"/><rect x="81.1" y="837.1" width="2.2" height="2.2"/><rect x="81.1" y="839.6" width="2.2" height="2.2"/><rect x="69.0" y="836.9" width="2.2" height="2.2"/><rect x="68.0" y="842.8" width="2.2" height="2.2"/><rect x="89.0" y="841.2" width="2.2" height="2.2"/><rect x="88.6" y="847.8" width="2.2" height="2.2"/><rect x="86.8" y="852.1" width="2.2" height="2.2"/><rect x="97.4" y="850.0" width="2.2" height="2.2"/><rect x="106.8" y="845.2" width="2.2" height="2.2"/><rect x="114.0" y="835.2" width="2.2" height="2.2"/><rect x="118.6" y="832.1" width="2.2" height="2.2"/><rect x="125.9" y="836.9" width="2.2" height="2.2"/><rect x="129.2" y="834.0" width="2.2" height="2.2"/><rect x="132.1" y="834.0" width="2.2" height="2.2"/><rect x="148.6" y="842.5" width="2.2" height="2.2"/><rect x="118.6" y="848.8" width="2.2" height="2.2"/><rect x="130.5" y="851.5" width="2.2" height="2.2"/><rect x="143.0" y="850.0" width="2.2" height="2.2"/><rect x="146.1" y="849.0" width="2.2" height="2.2"/><rect x="167.8" y="834.0" width="2.2" height="2.2"/><rect x="175.5" y="834.0" width="2.2" height="2.2"/><rect x="176.8" y="830.6" width="2.2" height="2.2"/><rect x="183.0" y="837.8" width="2.2" height="2.2"/><rect x="183.6" y="842.8" width="2.2" height="2.2"/><rect x="182.8" y="844.2" width="2.2" height="2.2"/><rect x="176.8" y="845.5" width="2.2" height="2.2"/><rect x="169.2" y="844.0" width="2.2" height="2.2"/><rect x="163.4" y="841.2" width="2.2" height="2.2"/><rect x="209.6" y="835.0" width="2.2" height="2.2"/><rect x="217.1" y="842.1" width="2.2" height="2.2"/><rect x="222.1" y="837.8" width="2.2" height="2.2"/><rect x="206.8" y="847.1" width="2.2" height="2.2"/><rect x="211.1" y="847.1" width="2.2" height="2.2"/><rect x="194.9" y="850.0" width="2.2" height="2.2"/><rect x="199.0" y="851.5" width="2.2" height="2.2"/><rect x="344.0" y="729.2" width="2.2" height="2.2"/><rect x="348.6" y="729.2" width="2.2" height="2.2"/><rect x="296.1" y="729.2" width="2.2" height="2.2"/><rect x="257.8" y="730.9" width="2.2" height="2.2"/><rect x="283.0" y="732.1" width="2.2" height="2.2"/><rect x="311.1" y="732.1" width="2.2" height="2.2"/><rect x="327.8" y="733.4" width="2.2" height="2.2"/><rect x="306.8" y="735.5" width="2.2" height="2.2"/><rect x="314.2" y="735.5" width="2.2" height="2.2"/><rect x="320.2" y="738.4" width="2.2" height="2.2"/><rect x="229.0" y="735.5" width="2.2" height="2.2"/><rect x="232.0" y="738.4" width="2.2" height="2.2"/><rect x="239.9" y="736.5" width="2.2" height="2.2"/><rect x="242.8" y="736.5" width="2.2" height="2.2"/><rect x="242.4" y="741.1" width="2.2" height="2.2"/><rect x="269.2" y="739.6" width="2.2" height="2.2"/><rect x="241.1" y="747.1" width="2.2" height="2.2"/><rect x="247.0" y="747.1" width="2.2" height="2.2"/><rect x="257.4" y="751.5" width="2.2" height="2.2"/><rect x="260.2" y="750.2" width="2.2" height="2.2"/><rect x="279.9" y="748.6" width="2.2" height="2.2"/><rect x="306.8" y="748.6" width="2.2" height="2.2"/><rect x="341.8" y="747.1" width="2.2" height="2.2"/><rect x="345.5" y="751.8" width="2.2" height="2.2"/><rect x="347.1" y="756.2" width="2.2" height="2.2"/><rect x="357.4" y="744.0" width="2.2" height="2.2"/><rect x="375.2" y="741.1" width="2.2" height="2.2"/><rect x="370.9" y="747.1" width="2.2" height="2.2"/><rect x="374.0" y="750.0" width="2.2" height="2.2"/><rect x="381.5" y="747.1" width="2.2" height="2.2"/><rect x="246.8" y="754.4" width="2.2" height="2.2"/><rect x="250.2" y="756.2" width="2.2" height="2.2"/><rect x="266.5" y="754.4" width="2.2" height="2.2"/><rect x="277.0" y="753.4" width="2.2" height="2.2"/><rect x="272.4" y="757.5" width="2.2" height="2.2"/><rect x="287.4" y="756.2" width="2.2" height="2.2"/><rect x="300.8" y="757.5" width="2.2" height="2.2"/><rect x="304.2" y="759.0" width="2.2" height="2.2"/><rect x="307.0" y="759.0" width="2.2" height="2.2"/><rect x="304.2" y="761.9" width="2.2" height="2.2"/><rect x="314.2" y="757.5" width="2.2" height="2.2"/><rect x="324.6" y="753.4" width="2.2" height="2.2"/><rect x="321.8" y="760.6" width="2.2" height="2.2"/><rect x="324.6" y="763.8" width="2.2" height="2.2"/><rect x="260.2" y="761.9" width="2.2" height="2.2"/><rect x="278.2" y="763.8" width="2.2" height="2.2"/><rect x="293.2" y="761.9" width="2.2" height="2.2"/><rect x="233.6" y="765.0" width="2.2" height="2.2"/><rect x="241.1" y="763.8" width="2.2" height="2.2"/><rect x="233.6" y="772.5" width="2.2" height="2.2"/><rect x="244.0" y="774.0" width="2.2" height="2.2"/><rect x="245.5" y="778.4" width="2.2" height="2.2"/><rect x="247.0" y="780.0" width="2.2" height="2.2"/><rect x="229.0" y="780.0" width="2.2" height="2.2"/><rect x="262.0" y="780.0" width="2.2" height="2.2"/><rect x="267.8" y="783.1" width="2.2" height="2.2"/><rect x="273.6" y="778.4" width="2.2" height="2.2"/><rect x="281.1" y="780.0" width="2.2" height="2.2"/><rect x="289.5" y="772.5" width="2.2" height="2.2"/><rect x="294.6" y="778.4" width="2.2" height="2.2"/><rect x="300.8" y="770.2" width="2.2" height="2.2"/><rect x="309.9" y="772.5" width="2.2" height="2.2"/><rect x="314.2" y="774.0" width="2.2" height="2.2"/><rect x="319.2" y="768.4" width="2.2" height="2.2"/><rect x="314.2" y="781.5" width="2.2" height="2.2"/><rect x="327.8" y="778.4" width="2.2" height="2.2"/><rect x="341.1" y="769.4" width="2.2" height="2.2"/><rect x="342.8" y="775.5" width="2.2" height="2.2"/><rect x="347.1" y="765.0" width="2.2" height="2.2"/><rect x="349.9" y="775.5" width="2.2" height="2.2"/><rect x="354.6" y="770.9" width="2.2" height="2.2"/><rect x="359.0" y="763.8" width="2.2" height="2.2"/><rect x="362.0" y="760.6" width="2.2" height="2.2"/><rect x="360.5" y="770.9" width="2.2" height="2.2"/><rect x="370.9" y="780.0" width="2.2" height="2.2"/><rect x="347.1" y="787.5" width="2.2" height="2.2"/><rect x="331.1" y="787.5" width="2.2" height="2.2"/><rect x="329.2" y="792.1" width="2.2" height="2.2"/><rect x="332.0" y="797.8" width="2.2" height="2.2"/><rect x="311.1" y="790.2" width="2.2" height="2.2"/><rect x="314.2" y="793.4" width="2.2" height="2.2"/><rect x="297.8" y="789.0" width="2.2" height="2.2"/><rect x="284.2" y="790.2" width="2.2" height="2.2"/><rect x="290.2" y="797.8" width="2.2" height="2.2"/><rect x="242.4" y="789.0" width="2.2" height="2.2"/><rect x="230.5" y="792.1" width="2.2" height="2.2"/><rect x="247.0" y="795.0" width="2.2" height="2.2"/><rect x="241.1" y="799.4" width="2.2" height="2.2"/><rect x="247.0" y="800.9" width="2.2" height="2.2"/><rect x="256.1" y="799.4" width="2.2" height="2.2"/><rect x="374.0" y="792.1" width="2.2" height="2.2"/><rect x="260.2" y="806.9" width="2.2" height="2.2"/><rect x="266.5" y="811.1" width="2.2" height="2.2"/><rect x="277.0" y="805.2" width="2.2" height="2.2"/><rect x="287.4" y="806.9" width="2.2" height="2.2"/><rect x="284.2" y="812.8" width="2.2" height="2.2"/><rect x="232.1" y="809.9" width="2.2" height="2.2"/><rect x="242.4" y="812.8" width="2.2" height="2.2"/><rect x="224.9" y="817.1" width="2.2" height="2.2"/><rect x="246.8" y="817.1" width="2.2" height="2.2"/><rect x="249.9" y="817.1" width="2.2" height="2.2"/><rect x="245.5" y="820.2" width="2.2" height="2.2"/><rect x="260.2" y="820.2" width="2.2" height="2.2"/><rect x="269.2" y="817.1" width="2.2" height="2.2"/><rect x="277.0" y="817.1" width="2.2" height="2.2"/><rect x="309.5" y="814.0" width="2.2" height="2.2"/><rect x="314.2" y="816.1" width="2.2" height="2.2"/><rect x="324.6" y="809.9" width="2.2" height="2.2"/><rect x="327.8" y="817.1" width="2.2" height="2.2"/><rect x="324.6" y="821.8" width="2.2" height="2.2"/><rect x="327.8" y="823.4" width="2.2" height="2.2"/><rect x="335.2" y="808.4" width="2.2" height="2.2"/><rect x="336.8" y="805.2" width="2.2" height="2.2"/><rect x="374.0" y="809.9" width="2.2" height="2.2"/><rect x="378.4" y="809.9" width="2.2" height="2.2"/><rect x="375.2" y="812.8" width="2.2" height="2.2"/><rect x="382.1" y="811.1" width="2.2" height="2.2"/><rect x="379.9" y="817.1" width="2.2" height="2.2"/><rect x="239.9" y="823.4" width="2.2" height="2.2"/><rect x="246.8" y="827.8" width="2.2" height="2.2"/><rect x="236.5" y="830.9" width="2.2" height="2.2"/><rect x="245.5" y="832.1" width="2.2" height="2.2"/><rect x="233.6" y="835.2" width="2.2" height="2.2"/><rect x="247.0" y="835.2" width="2.2" height="2.2"/><rect x="270.8" y="829.0" width="2.2" height="2.2"/><rect x="276.8" y="826.2" width="2.2" height="2.2"/><rect x="275.2" y="836.9" width="2.2" height="2.2"/><rect x="314.2" y="826.2" width="2.2" height="2.2"/><rect x="314.2" y="833.8" width="2.2" height="2.2"/><rect x="226.1" y="842.8" width="2.2" height="2.2"/><rect x="227.8" y="845.5" width="2.2" height="2.2"/><rect x="238.0" y="845.5" width="2.2" height="2.2"/><rect x="223.6" y="837.8" width="2.2" height="2.2"/><rect x="251.5" y="850.0" width="2.2" height="2.2"/><rect x="260.2" y="848.8" width="2.2" height="2.2"/><rect x="266.5" y="848.8" width="2.2" height="2.2"/><rect x="81.8" y="858.4" width="2.2" height="2.2"/><rect x="72.0" y="863.8" width="2.2" height="2.2"/><rect x="102.0" y="860.5" width="2.2" height="2.2"/><rect x="119.5" y="862.5" width="2.2" height="2.2"/><rect x="118.0" y="863.8" width="2.2" height="2.2"/><rect x="127.8" y="862.1" width="2.2" height="2.2"/><rect x="153.0" y="859.0" width="2.2" height="2.2"/><rect x="158.0" y="859.6" width="2.2" height="2.2"/><rect x="173.6" y="861.8" width="2.2" height="2.2"/><rect x="193.4" y="860.5" width="2.2" height="2.2"/><rect x="153.0" y="865.0" width="2.2" height="2.2"/><rect x="114.0" y="866.2" width="2.2" height="2.2"/><rect x="137.8" y="867.8" width="2.2" height="2.2"/><rect x="71.5" y="873.8" width="2.2" height="2.2"/><rect x="129.0" y="870.9" width="2.2" height="2.2"/><rect x="118.9" y="872.8" width="2.2" height="2.2"/><rect x="132.1" y="874.0" width="2.2" height="2.2"/><rect x="115.5" y="876.2" width="2.2" height="2.2"/><rect x="162.0" y="874.0" width="2.2" height="2.2"/><rect x="99.0" y="876.9" width="2.2" height="2.2"/><rect x="105.2" y="880.0" width="2.2" height="2.2"/><rect x="96.1" y="881.5" width="2.2" height="2.2"/><rect x="135.2" y="878.4" width="2.2" height="2.2"/><rect x="155.8" y="881.2" width="2.2" height="2.2"/><rect x="82.8" y="884.4" width="2.2" height="2.2"/><rect x="85.8" y="885.9" width="2.2" height="2.2"/><rect x="88.6" y="885.9" width="2.2" height="2.2"/><rect x="102.1" y="885.9" width="2.2" height="2.2"/><rect x="108.2" y="887.5" width="2.2" height="2.2"/><rect x="121.8" y="886.8" width="2.2" height="2.2"/><rect x="134.9" y="887.5" width="2.2" height="2.2"/><rect x="75.2" y="887.5" width="2.2" height="2.2"/><rect x="100.5" y="894.6" width="2.2" height="2.2"/><rect x="109.5" y="894.6" width="2.2" height="2.2"/><rect x="69.2" y="904.0" width="2.2" height="2.2"/><rect x="88.6" y="904.0" width="2.2" height="2.2"/><rect x="78.2" y="912.8" width="2.2" height="2.2"/><rect x="85.8" y="911.5" width="2.2" height="2.2"/><rect x="70.8" y="923.1" width="2.2" height="2.2"/><rect x="69.2" y="936.8" width="2.2" height="2.2"/><rect x="689.2" y="572.0" width="2.2" height="2.2"/><rect x="686.0" y="575.2" width="2.2" height="2.2"/><rect x="690.0" y="584.0" width="2.2" height="2.2"/><rect x="682.5" y="596.5" width="2.2" height="2.2"/><rect x="391.8" y="612.8" width="2.2" height="2.2"/><rect x="657.5" y="611.0" width="2.2" height="2.2"/><rect x="536.8" y="616.0" width="2.2" height="2.2"/><rect x="615.5" y="617.2" width="2.2" height="2.2"/><rect x="611.8" y="618.5" width="2.2" height="2.2"/><rect x="608.0" y="619.8" width="2.2" height="2.2"/><rect x="699.2" y="627.0" width="2.2" height="2.2"/><rect x="626.2" y="629.5" width="2.2" height="2.2"/><rect x="666.2" y="629.5" width="2.2" height="2.2"/><rect x="559.2" y="627.8" width="2.2" height="2.2"/><rect x="538.0" y="627.8" width="2.2" height="2.2"/><rect x="528.0" y="632.2" width="2.2" height="2.2"/><rect x="541.0" y="632.2" width="2.2" height="2.2"/><rect x="545.0" y="633.5" width="2.2" height="2.2"/><rect x="548.5" y="633.5" width="2.2" height="2.2"/><rect x="424.5" y="632.2" width="2.2" height="2.2"/><rect x="489.2" y="633.5" width="2.2" height="2.2"/><rect x="573.5" y="634.8" width="2.2" height="2.2"/><rect x="555.5" y="638.5" width="2.2" height="2.2"/><rect x="681.2" y="639.8" width="2.2" height="2.2"/><rect x="662.2" y="641.0" width="2.2" height="2.2"/><rect x="653.0" y="642.8" width="2.2" height="2.2"/><rect x="505.0" y="642.8" width="2.2" height="2.2"/><rect x="515.5" y="642.8" width="2.2" height="2.2"/><rect x="675.0" y="645.8" width="2.2" height="2.2"/><rect x="656.2" y="650.2" width="2.2" height="2.2"/><rect x="565.0" y="647.2" width="2.2" height="2.2"/><rect x="586.0" y="650.2" width="2.2" height="2.2"/><rect x="437.5" y="648.5" width="2.2" height="2.2"/><rect x="436.2" y="653.0" width="2.2" height="2.2"/><rect x="481.0" y="651.5" width="2.2" height="2.2"/><rect x="421.2" y="654.5" width="2.2" height="2.2"/><rect x="545.5" y="653.2" width="2.2" height="2.2"/><rect x="542.2" y="656.0" width="2.2" height="2.2"/><rect x="639.8" y="653.2" width="2.2" height="2.2"/><rect x="518.8" y="656.0" width="2.2" height="2.2"/><rect x="409.5" y="657.8" width="2.2" height="2.2"/><rect x="475.0" y="659.0" width="2.2" height="2.2"/><rect x="388.5" y="660.8" width="2.2" height="2.2"/><rect x="615.5" y="660.8" width="2.2" height="2.2"/><rect x="626.2" y="660.8" width="2.2" height="2.2"/><rect x="688.8" y="662.0" width="2.2" height="2.2"/><rect x="448.5" y="663.5" width="2.2" height="2.2"/><rect x="499.2" y="664.0" width="2.2" height="2.2"/><rect x="538.0" y="665.2" width="2.2" height="2.2"/><rect x="399.8" y="665.2" width="2.2" height="2.2"/><rect x="398.5" y="667.0" width="2.2" height="2.2"/><rect x="390.0" y="666.0" width="2.2" height="2.2"/><rect x="386.8" y="669.0" width="2.2" height="2.2"/><rect x="385.0" y="670.2" width="2.2" height="2.2"/><rect x="400.5" y="671.5" width="2.2" height="2.2"/><rect x="428.8" y="667.0" width="2.2" height="2.2"/><rect x="461.8" y="667.0" width="2.2" height="2.2"/><rect x="408.5" y="668.2" width="2.2" height="2.2"/><rect x="472.5" y="668.2" width="2.2" height="2.2"/><rect x="481.0" y="668.2" width="2.2" height="2.2"/><rect x="500.5" y="669.5" width="2.2" height="2.2"/><rect x="518.8" y="669.5" width="2.2" height="2.2"/><rect x="561.8" y="668.2" width="2.2" height="2.2"/><rect x="595.0" y="668.2" width="2.2" height="2.2"/><rect x="593.0" y="671.0" width="2.2" height="2.2"/><rect x="639.8" y="669.5" width="2.2" height="2.2"/><rect x="673.8" y="672.8" width="2.2" height="2.2"/><rect x="688.8" y="675.2" width="2.2" height="2.2"/><rect x="642.5" y="676.5" width="2.2" height="2.2"/><rect x="649.8" y="676.5" width="2.2" height="2.2"/><rect x="512.5" y="676.5" width="2.2" height="2.2"/><rect x="536.2" y="675.8" width="2.2" height="2.2"/><rect x="434.8" y="671.0" width="2.2" height="2.2"/><rect x="461.8" y="675.8" width="2.2" height="2.2"/><rect x="433.8" y="676.5" width="2.2" height="2.2"/><rect x="392.0" y="675.8" width="2.2" height="2.2"/><rect x="396.2" y="681.5" width="2.2" height="2.2"/><rect x="408.0" y="681.5" width="2.2" height="2.2"/><rect x="427.2" y="680.2" width="2.2" height="2.2"/><rect x="444.2" y="681.5" width="2.2" height="2.2"/><rect x="445.5" y="683.5" width="2.2" height="2.2"/><rect x="454.2" y="682.8" width="2.2" height="2.2"/><rect x="458.5" y="684.5" width="2.2" height="2.2"/><rect x="480.0" y="681.5" width="2.2" height="2.2"/><rect x="524.8" y="680.2" width="2.2" height="2.2"/><rect x="583.0" y="684.0" width="2.2" height="2.2"/><rect x="575.5" y="684.0" width="2.2" height="2.2"/><rect x="590.0" y="678.5" width="2.2" height="2.2"/><rect x="591.8" y="684.0" width="2.2" height="2.2"/><rect x="558.8" y="685.8" width="2.2" height="2.2"/><rect x="538.0" y="685.8" width="2.2" height="2.2"/><rect x="530.5" y="687.2" width="2.2" height="2.2"/><rect x="485.5" y="687.2" width="2.2" height="2.2"/><rect x="500.5" y="689.0" width="2.2" height="2.2"/><rect x="505.0" y="689.0" width="2.2" height="2.2"/><rect x="551.8" y="689.0" width="2.2" height="2.2"/><rect x="555.0" y="689.0" width="2.2" height="2.2"/><rect x="621.8" y="690.2" width="2.2" height="2.2"/><rect x="626.2" y="690.2" width="2.2" height="2.2"/><rect x="650.0" y="689.0" width="2.2" height="2.2"/><rect x="586.0" y="690.2" width="2.2" height="2.2"/><rect x="406.2" y="689.0" width="2.2" height="2.2"/><rect x="418.8" y="690.2" width="2.2" height="2.2"/><rect x="437.5" y="690.2" width="2.2" height="2.2"/><rect x="441.2" y="691.5" width="2.2" height="2.2"/><rect x="478.5" y="691.5" width="2.2" height="2.2"/><rect x="392.0" y="691.5" width="2.2" height="2.2"/><rect x="408.0" y="695.2" width="2.2" height="2.2"/><rect x="561.8" y="695.2" width="2.2" height="2.2"/><rect x="608.5" y="694.8" width="2.2" height="2.2"/><rect x="627.5" y="696.5" width="2.2" height="2.2"/><rect x="446.8" y="697.8" width="2.2" height="2.2"/><rect x="457.5" y="697.8" width="2.2" height="2.2"/><rect x="450.5" y="702.8" width="2.2" height="2.2"/><rect x="453.0" y="706.0" width="2.2" height="2.2"/><rect x="455.5" y="707.0" width="2.2" height="2.2"/><rect x="464.8" y="704.0" width="2.2" height="2.2"/><rect x="477.5" y="706.5" width="2.2" height="2.2"/><rect x="481.0" y="702.8" width="2.2" height="2.2"/><rect x="484.2" y="709.8" width="2.2" height="2.2"/><rect x="498.0" y="704.0" width="2.2" height="2.2"/><rect x="508.0" y="708.5" width="2.2" height="2.2"/><rect x="512.5" y="709.5" width="2.2" height="2.2"/><rect x="669.2" y="701.0" width="2.2" height="2.2"/><rect x="676.8" y="702.2" width="2.2" height="2.2"/><rect x="623.0" y="702.2" width="2.2" height="2.2"/><rect x="599.2" y="701.0" width="2.2" height="2.2"/><rect x="610.0" y="704.0" width="2.2" height="2.2"/><rect x="604.2" y="707.0" width="2.2" height="2.2"/><rect x="413.0" y="708.5" width="2.2" height="2.2"/><rect x="394.8" y="707.0" width="2.2" height="2.2"/><rect x="438.0" y="712.5" width="2.2" height="2.2"/><rect x="421.8" y="719.0" width="2.2" height="2.2"/><rect x="424.2" y="719.8" width="2.2" height="2.2"/><rect x="433.0" y="721.5" width="2.2" height="2.2"/><rect x="435.5" y="723.5" width="2.2" height="2.2"/><rect x="454.2" y="719.0" width="2.2" height="2.2"/><rect x="489.2" y="714.0" width="2.2" height="2.2"/><rect x="525.0" y="714.0" width="2.2" height="2.2"/><rect x="524.2" y="720.2" width="2.2" height="2.2"/><rect x="553.0" y="712.0" width="2.2" height="2.2"/><rect x="555.0" y="710.2" width="2.2" height="2.2"/><rect x="569.2" y="708.5" width="2.2" height="2.2"/><rect x="575.5" y="705.2" width="2.2" height="2.2"/><rect x="581.8" y="716.0" width="2.2" height="2.2"/><rect x="585.5" y="708.5" width="2.2" height="2.2"/><rect x="590.0" y="720.2" width="2.2" height="2.2"/><rect x="593.0" y="723.5" width="2.2" height="2.2"/><rect x="595.0" y="711.0" width="2.2" height="2.2"/><rect x="599.2" y="710.2" width="2.2" height="2.2"/><rect x="602.5" y="722.0" width="2.2" height="2.2"/><rect x="615.5" y="724.5" width="2.2" height="2.2"/><rect x="636.8" y="714.0" width="2.2" height="2.2"/><rect x="650.0" y="714.0" width="2.2" height="2.2"/><rect x="653.0" y="715.2" width="2.2" height="2.2"/><rect x="676.8" y="714.5" width="2.2" height="2.2"/><rect x="573.5" y="715.2" width="2.2" height="2.2"/><rect x="575.5" y="722.8" width="2.2" height="2.2"/><rect x="559.2" y="720.2" width="2.2" height="2.2"/><rect x="559.2" y="723.2" width="2.2" height="2.2"/><rect x="502.5" y="724.5" width="2.2" height="2.2"/><rect x="511.2" y="723.2" width="2.2" height="2.2"/><rect x="421.8" y="726.5" width="2.2" height="2.2"/><rect x="405.0" y="729.5" width="2.2" height="2.2"/><rect x="405.5" y="733.5" width="2.2" height="2.2"/><rect x="421.8" y="733.5" width="2.2" height="2.2"/><rect x="455.5" y="729.0" width="2.2" height="2.2"/><rect x="457.5" y="731.5" width="2.2" height="2.2"/><rect x="459.2" y="734.0" width="2.2" height="2.2"/><rect x="454.2" y="734.0" width="2.2" height="2.2"/><rect x="485.5" y="729.5" width="2.2" height="2.2"/><rect x="508.0" y="733.2" width="2.2" height="2.2"/><rect x="510.5" y="733.2" width="2.2" height="2.2"/><rect x="518.8" y="731.0" width="2.2" height="2.2"/><rect x="539.8" y="729.5" width="2.2" height="2.2"/><rect x="566.8" y="729.5" width="2.2" height="2.2"/><rect x="636.8" y="732.0" width="2.2" height="2.2"/><rect x="654.2" y="727.8" width="2.2" height="2.2"/><rect x="683.0" y="732.0" width="2.2" height="2.2"/><rect x="688.8" y="727.8" width="2.2" height="2.2"/><rect x="701.8" y="735.2" width="2.2" height="2.2"/><rect x="396.2" y="737.0" width="2.2" height="2.2"/><rect x="429.2" y="739.5" width="2.2" height="2.2"/><rect x="483.0" y="737.0" width="2.2" height="2.2"/><rect x="500.5" y="741.0" width="2.2" height="2.2"/><rect x="530.5" y="736.5" width="2.2" height="2.2"/><rect x="450.5" y="742.8" width="2.2" height="2.2"/><rect x="452.5" y="742.8" width="2.2" height="2.2"/><rect x="642.2" y="739.0" width="2.2" height="2.2"/><rect x="657.5" y="744.5" width="2.2" height="2.2"/><rect x="663.5" y="745.2" width="2.2" height="2.2"/><rect x="524.8" y="742.8" width="2.2" height="2.2"/><rect x="419.2" y="746.5" width="2.2" height="2.2"/><rect x="423.0" y="744.5" width="2.2" height="2.2"/><rect x="421.8" y="749.0" width="2.2" height="2.2"/><rect x="445.5" y="749.0" width="2.2" height="2.2"/><rect x="454.2" y="752.8" width="2.2" height="2.2"/><rect x="431.2" y="750.2" width="2.2" height="2.2"/><rect x="425.0" y="752.0" width="2.2" height="2.2"/><rect x="513.0" y="751.5" width="2.2" height="2.2"/><rect x="517.2" y="750.2" width="2.2" height="2.2"/><rect x="548.0" y="751.5" width="2.2" height="2.2"/><rect x="570.5" y="749.0" width="2.2" height="2.2"/><rect x="575.0" y="749.5" width="2.2" height="2.2"/><rect x="570.5" y="754.5" width="2.2" height="2.2"/><rect x="574.2" y="754.5" width="2.2" height="2.2"/><rect x="672.2" y="754.5" width="2.2" height="2.2"/><rect x="530.5" y="756.0" width="2.2" height="2.2"/><rect x="390.0" y="754.5" width="2.2" height="2.2"/><rect x="405.0" y="754.5" width="2.2" height="2.2"/><rect x="458.8" y="759.0" width="2.2" height="2.2"/><rect x="481.8" y="757.8" width="2.2" height="2.2"/><rect x="502.5" y="757.8" width="2.2" height="2.2"/><rect x="503.0" y="759.0" width="2.2" height="2.2"/><rect x="479.8" y="763.5" width="2.2" height="2.2"/><rect x="546.0" y="763.5" width="2.2" height="2.2"/><rect x="390.5" y="766.5" width="2.2" height="2.2"/><rect x="403.8" y="765.2" width="2.2" height="2.2"/><rect x="421.2" y="765.2" width="2.2" height="2.2"/><rect x="426.8" y="762.8" width="2.2" height="2.2"/><rect x="462.5" y="767.8" width="2.2" height="2.2"/><rect x="464.2" y="768.2" width="2.2" height="2.2"/><rect x="469.2" y="771.5" width="2.2" height="2.2"/><rect x="473.5" y="772.8" width="2.2" height="2.2"/><rect x="466.8" y="774.0" width="2.2" height="2.2"/><rect x="430.5" y="769.8" width="2.2" height="2.2"/><rect x="391.8" y="772.2" width="2.2" height="2.2"/><rect x="512.5" y="773.5" width="2.2" height="2.2"/><rect x="529.2" y="775.2" width="2.2" height="2.2"/><rect x="536.8" y="775.2" width="2.2" height="2.2"/><rect x="410.5" y="777.2" width="2.2" height="2.2"/><rect x="419.2" y="778.5" width="2.2" height="2.2"/><rect x="400.5" y="781.0" width="2.2" height="2.2"/><rect x="410.0" y="781.5" width="2.2" height="2.2"/><rect x="423.0" y="782.8" width="2.2" height="2.2"/><rect x="437.5" y="784.8" width="2.2" height="2.2"/><rect x="485.5" y="786.0" width="2.2" height="2.2"/><rect x="385.0" y="786.0" width="2.2" height="2.2"/><rect x="441.2" y="796.0" width="2.2" height="2.2"/><rect x="857.5" y="540.2" width="2.2" height="2.2"/><rect x="826.0" y="547.2" width="2.2" height="2.2"/><rect x="838.0" y="547.2" width="2.2" height="2.2"/><rect x="769.2" y="563.5" width="2.2" height="2.2"/><rect x="809.2" y="559.0" width="2.2" height="2.2"/><rect x="816.0" y="561.0" width="2.2" height="2.2"/><rect x="811.0" y="564.0" width="2.2" height="2.2"/><rect x="815.5" y="568.5" width="2.2" height="2.2"/><rect x="803.0" y="574.0" width="2.2" height="2.2"/><rect x="811.0" y="581.5" width="2.2" height="2.2"/><rect x="727.5" y="581.5" width="2.2" height="2.2"/><rect x="763.5" y="590.2" width="2.2" height="2.2"/><rect x="775.5" y="587.2" width="2.2" height="2.2"/><rect x="786.0" y="592.8" width="2.2" height="2.2"/><rect x="779.8" y="597.8" width="2.2" height="2.2"/><rect x="713.0" y="596.5" width="2.2" height="2.2"/><rect x="718.5" y="602.2" width="2.2" height="2.2"/><rect x="942.5" y="577.0" width="2.2" height="2.2"/><rect x="911.0" y="592.8" width="2.2" height="2.2"/><rect x="926.2" y="608.5" width="2.2" height="2.2"/><rect x="820.5" y="606.5" width="2.2" height="2.2"/><rect x="834.2" y="614.0" width="2.2" height="2.2"/><rect x="740.0" y="609.8" width="2.2" height="2.2"/><rect x="750.0" y="617.2" width="2.2" height="2.2"/><rect x="778.5" y="619.0" width="2.2" height="2.2"/><rect x="713.0" y="619.0" width="2.2" height="2.2"/><rect x="706.8" y="623.5" width="2.2" height="2.2"/><rect x="720.5" y="623.5" width="2.2" height="2.2"/><rect x="807.2" y="623.5" width="2.2" height="2.2"/><rect x="848.5" y="619.0" width="2.2" height="2.2"/><rect x="871.0" y="595.2" width="2.2" height="2.2"/><rect x="876.8" y="603.5" width="2.2" height="2.2"/><rect x="858.0" y="604.5" width="2.2" height="2.2"/><rect x="876.8" y="621.5" width="2.2" height="2.2"/><rect x="743.0" y="629.0" width="2.2" height="2.2"/><rect x="726.2" y="632.2" width="2.2" height="2.2"/><rect x="763.5" y="636.5" width="2.2" height="2.2"/><rect x="784.8" y="634.0" width="2.2" height="2.2"/><rect x="847.2" y="634.8" width="2.2" height="2.2"/><rect x="856.0" y="635.2" width="2.2" height="2.2"/><rect x="863.5" y="629.0" width="2.2" height="2.2"/><rect x="898.0" y="645.2" width="2.2" height="2.2"/><rect x="876.8" y="648.5" width="2.2" height="2.2"/><rect x="814.2" y="649.8" width="2.2" height="2.2"/><rect x="771.0" y="663.2" width="2.2" height="2.2"/><rect x="783.0" y="663.2" width="2.2" height="2.2"/><rect x="845.5" y="667.0" width="2.2" height="2.2"/><rect x="706.8" y="670.8" width="2.2" height="2.2"/><rect x="759.2" y="672.8" width="2.2" height="2.2"/><rect x="771.0" y="670.8" width="2.2" height="2.2"/><rect x="766.8" y="675.8" width="2.2" height="2.2"/><rect x="809.8" y="670.8" width="2.2" height="2.2"/><rect x="824.8" y="672.8" width="2.2" height="2.2"/><rect x="736.8" y="677.8" width="2.2" height="2.2"/><rect x="704.2" y="680.2" width="2.2" height="2.2"/><rect x="736.8" y="686.0" width="2.2" height="2.2"/><rect x="802.5" y="678.2" width="2.2" height="2.2"/><rect x="823.0" y="679.0" width="2.2" height="2.2"/><rect x="756.0" y="687.8" width="2.2" height="2.2"/><rect x="768.0" y="687.8" width="2.2" height="2.2"/><rect x="725.0" y="690.2" width="2.2" height="2.2"/><rect x="713.0" y="696.5" width="2.2" height="2.2"/><rect x="720.0" y="698.2" width="2.2" height="2.2"/><rect x="766.8" y="695.2" width="2.2" height="2.2"/><rect x="729.2" y="705.2" width="2.2" height="2.2"/><rect x="711.8" y="710.2" width="2.2" height="2.2"/><rect x="710.0" y="712.8" width="2.2" height="2.2"/><rect x="733.5" y="717.0" width="2.2" height="2.2"/><rect x="811.2" y="717.0" width="2.2" height="2.2"/><rect x="743.0" y="732.0" width="2.2" height="2.2"/><rect x="760.5" y="731.0" width="2.2" height="2.2"/><rect x="775.5" y="732.0" width="2.2" height="2.2"/><rect x="782.5" y="733.2" width="2.2" height="2.2"/><rect x="821.8" y="733.2" width="2.2" height="2.2"/><rect x="738.5" y="738.2" width="2.2" height="2.2"/><rect x="750.0" y="738.2" width="2.2" height="2.2"/><rect x="849.2" y="749.8" width="2.2" height="2.2"/><rect x="911.0" y="745.8" width="2.2" height="2.2"/><rect x="890.5" y="759.0" width="2.2" height="2.2"/><rect x="936.8" y="762.2" width="2.2" height="2.2"/><rect x="791.8" y="766.5" width="2.2" height="2.2"/><rect x="810.0" y="767.8" width="2.2" height="2.2"/><rect x="813.0" y="765.2" width="2.2" height="2.2"/><rect x="384.0" y="810.0" width="2.2" height="2.2"/><rect x="406.5" y="804.0" width="2.2" height="2.2"/><rect x="426.5" y="804.0" width="2.2" height="2.2"/><rect x="751.5" y="812.5" width="2.2" height="2.2"/><rect x="786.0" y="810.0" width="2.2" height="2.2"/><rect x="860.5" y="832.5" width="2.2" height="2.2"/><rect x="870.5" y="816.5" width="2.2" height="2.2"/><rect x="885.5" y="836.5" width="2.2" height="2.2"/><rect x="894.5" y="792.5" width="2.2" height="2.2"/><rect x="979.5" y="880.0" width="2.2" height="2.2"/><rect x="792.0" y="538.0" width="2.2" height="2.2"/></g>
</svg>
<div class="a cl" style="right:1219px;top:219.5px">150</div>
<div class="a cl" style="right:1219px;top:345.5px">125</div>
<div class="a cl" style="right:1219px;top:471.5px">100</div>
<div class="a cl" style="right:1219px;top:597.5px">75</div>
<div class="a cl" style="right:1219px;top:723.5px">50</div>
<div class="a cl" style="right:1219px;top:849.5px">25</div>
<div class="a cl" style="left:1035px;top:219.5px">60</div>
<div class="a cl" style="left:1035px;top:345.5px">50</div>
<div class="a cl" style="left:1035px;top:471.5px">40</div>
<div class="a cl" style="left:1035px;top:597.5px">30</div>
<div class="a cl" style="left:1035px;top:723.5px">20</div>
<div class="a cl" style="left:1035px;top:849.5px">10</div>
<div class="a cl" style="left:8.5px;width:120px;text-align:center;top:993px">0</div>
<div class="a cl" style="left:104.5px;width:120px;text-align:center;top:993px">200</div>
<div class="a cl" style="left:200.5px;width:120px;text-align:center;top:993px">400</div>
<div class="a cl" style="left:296.5px;width:120px;text-align:center;top:993px">600</div>
<div class="a cl" style="left:392.5px;width:120px;text-align:center;top:993px">800</div>
<div class="a cl" style="left:488.5px;width:120px;text-align:center;top:993px">1000</div>
<div class="a cl" style="left:584.5px;width:120px;text-align:center;top:993px">1200</div>
<div class="a cl" style="left:680.5px;width:120px;text-align:center;top:993px">1400</div>
<div class="a cl" style="left:776.5px;width:120px;text-align:center;top:993px">1600</div>
<div class="a cl" style="left:872.5px;width:120px;text-align:center;top:993px">1800</div>
<div class="a cl" style="left:1000px;top:993px">2000gB</div>
<div class="a cl" style="left:68px;top:209px">MB/s</div>
<div class="a cl" style="left:1007px;top:209px">ms</div>
<!-- RIGHT PANEL -->

<div class="btn" style="left:1096px;top:197px;width:128px;height:42px"></div>
<div class="lbl" style="left:1141px;top:207px;color:#222">开始</div>
<div class="sep" style="top:258px"></div>
<svg class="a" style="left:1088px;top:273px" width="22" height="52" viewBox="0 0 22 52"><circle cx="10.7" cy="11" r="8.6" fill="#fff" stroke="#333" stroke-width="1.6"/><circle cx="10.7" cy="11" r="4.6" fill="#333"/><circle cx="10.7" cy="42" r="8.6" fill="#fff" stroke="#333" stroke-width="1.6"/></svg>
<div class="lbl" style="left:1113px;top:274px">读取</div>
<div class="lbl" style="left:1113px;top:305px">写入</div>
<div class="sep" style="top:334px"></div>
<div class="chk" style="top:354px"></div>
<div class="lbl" style="left:1113px;top:353px">短行程</div>
<div class="a" style="left:1089px;top:388px;width:108px;height:38px;border:1px solid #c8c8c8;background:#fff"></div>
<div class="a" style="left:1171px;top:390px;width:25px;height:34px;background:#f0f0f0;border-left:1px solid #e4e4e4"></div>
<div class="a" style="left:1171px;top:406px;width:25px;height:1px;background:#dcdcdc"></div>
<svg class="a" style="left:1177px;top:397px" width="12" height="24" viewBox="0 0 12 24"><path d="M2 5h8L6 1z" fill="#777"/><path d="M2 16h8l-4 4z" fill="#777"/></svg>
<div class="a" style="left:1095px;top:395px;font-size:17.5px;color:#9a9a9a;line-height:20px">40</div>
<div class="a" style="left:1217px;top:398px;font-size:17px;color:#333;line-height:20px">GB</div>
<div class="chk" style="top:449px"></div>
<svg class="a" style="left:1091px;top:451px" width="17" height="16" viewBox="0 0 17 16"><path d="M2 8l4.5 4.5L15 3" fill="none" stroke="#333" stroke-width="1.6"/></svg>
<div class="lbl" style="left:1113px;top:448px">传输速率</div>
<div class="sep" style="top:474px"></div>
<div class="lbl" style="left:1089px;top:483px">最小</div>
<div class="box" style="top:510px;color:#1ab2f2">59.0 MB/s</div>
<div class="lbl" style="left:1089px;top:547px">最大</div>
<div class="box" style="top:574px;color:#1ab2f2">137.5 MB/s</div>
<div class="lbl" style="left:1089px;top:607px">平均</div>
<div class="box" style="top:634px;color:#1ab2f2">102.8 MB/s</div>
<div class="sep" style="top:677px"></div>
<div class="chk" style="top:692px"></div>
<svg class="a" style="left:1091px;top:694px" width="17" height="16" viewBox="0 0 17 16"><path d="M2 8l4.5 4.5L15 3" fill="none" stroke="#333" stroke-width="1.6"/></svg>
<div class="lbl" style="left:1113px;top:691px">访问时间</div>
<div class="box" style="top:719px;color:#f4f400">19.1 ms</div>
<div class="chk" style="top:760px"></div>
<svg class="a" style="left:1091px;top:762px" width="17" height="16" viewBox="0 0 17 16"><path d="M2 8l4.5 4.5L15 3" fill="none" stroke="#333" stroke-width="1.6"/></svg>
<div class="lbl" style="left:1113px;top:758px">突发速率</div>
<div class="box" style="top:786px;color:#fff">197.7 MB/s</div>
<div class="lbl" style="left:1089px;top:821px">CPU 使用率</div>
<div class="box" style="top:850px;color:#fff">6.3%</div>
<div class="lbl" style="left:1089px;top:908px">通过次数</div>
<div class="a" style="left:1089px;top:934px;width:136px;height:38px;border:1px solid #7a7a7a;background:#fff"></div>
<div class="a" style="left:1200px;top:937px;width:22px;height:16px;background:#e6e6e6;border:1px solid #c8c8c8"></div>
<div class="a" style="left:1200px;top:954px;width:22px;height:16px;background:#e6e6e6;border:1px solid #c8c8c8"></div>
<svg class="a" style="left:1205px;top:940px" width="12" height="28" viewBox="0 0 12 28"><path d="M1 7h10L6 2z" fill="#111"/><path d="M1 19h10l-5 5z" fill="#111"/></svg>
<div class="a" style="left:1096px;top:941px;font-size:17.5px;color:#222;line-height:20px">1</div>
<div class="a" style="left:1090px;top:989px;width:92px;height:23px;background:#06b02a"></div>
<div class="a" style="left:1192px;top:990px;font-size:17.5px;color:#222;line-height:20px">1/1</div>

</body></html>
